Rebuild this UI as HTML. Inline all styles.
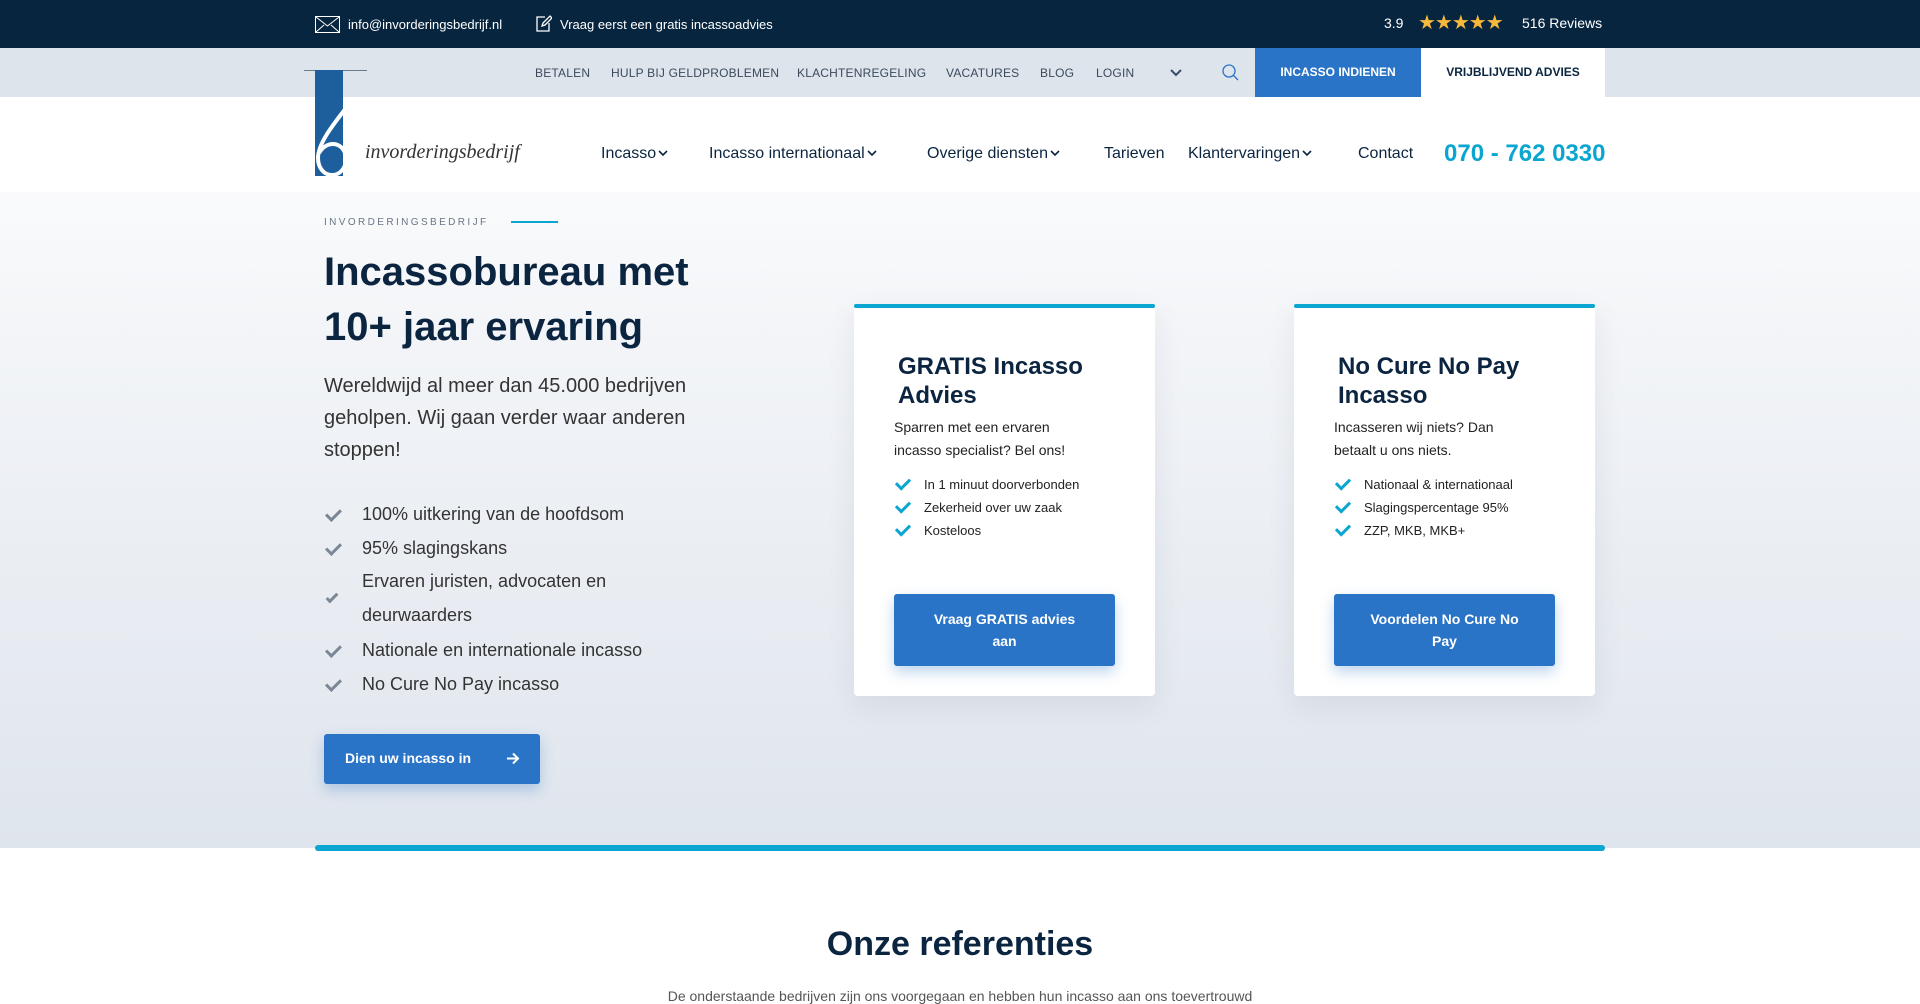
<!DOCTYPE html>
<html><head><meta charset="utf-8"><style>
*{margin:0;padding:0;box-sizing:border-box}
body{width:1920px;height:993px;overflow:hidden;font-family:"Liberation Sans",sans-serif;color:#0b2540;background:#fff;position:relative}
.abs{position:absolute}
.top{left:0;top:0;width:1920px;height:48px;background:#08253f;color:#fff;font-size:13px}
.sub{left:0;top:48px;width:1920px;height:49px;background:#dee4ec}
.sub span{position:absolute;top:18px;font-size:12px;color:#3a4a5c;letter-spacing:.2px}
.hero{left:0;top:97px;width:1920px;height:751px;background:linear-gradient(#fff 0%,#f3f5f8 30%,#dfe5ed 100%)}
.nav{font-size:16px;color:#0b2540;top:145px;white-space:nowrap}
.nav svg{margin-left:2px;vertical-align:1px}
.card{background:#fff;border-radius:4px;box-shadow:0 10px 30px rgba(20,40,80,.08)}
.card .bar{position:absolute;left:0;top:0;width:100%;height:4px;background:#0aa6d1;border-radius:2px}
.card h3{position:absolute;left:44px;top:48px;font-size:24px;line-height:29px;font-weight:700;color:#0b2540}
.card p{position:absolute;left:40px;top:112px;font-size:14px;line-height:23px;color:#222;width:200px}
.card ul{position:absolute;left:40px;top:173px;list-style:none;font-size:13px;color:#222;width:240px}
.card li{height:23px;padding-left:30px;position:relative}
.card li:before{content:"";position:absolute;left:2px;top:1px;width:11px;height:6px;border-left:3px solid #0aa6d1;border-bottom:3px solid #0aa6d1;transform:rotate(-45deg)}
.btn{background:#2a74c7;color:#fff;border-radius:3px;box-shadow:0 6px 14px rgba(42,116,199,.3);font-weight:700;text-align:center}
.hl{width:520px}
.hl li{position:absolute;left:0;font-size:18px;color:#333;padding-left:38px;list-style:none;white-space:nowrap}
.hl li:before{content:"";position:absolute;left:2px;top:5px;width:12px;height:6px;border-left:3px solid #7c8796;border-bottom:3px solid #7c8796;transform:rotate(-45deg)}
.hl li.no:before{display:none}
</style></head><body>
<div class="abs top">
 <svg class="abs" style="left:315px;top:16px" width="25" height="17" viewBox="0 0 25 17"><rect x="0.5" y="0.5" width="24" height="16" fill="none" stroke="#fff"/><path d="M1 1l11.5 9L24 1M1 16l8-7M24 16l-8-7" fill="none" stroke="#fff"/></svg>
 <span class="abs" style="left:348px;top:17px">info@invorderingsbedrijf.nl</span>
 <svg class="abs" style="left:536px;top:15px" width="16" height="17" viewBox="0 0 16 17"><path d="M9 2H1v14h12V8M6 11l1-3 7-7 2 2-7 7z" fill="none" stroke="#fff" stroke-width="1.3"/></svg>
 <span class="abs" style="left:560px;top:17px">Vraag eerst een gratis incassoadvies</span>
 <span class="abs" style="left:1384px;top:15px;font-size:14px">3.9</span>
 <span class="abs" style="left:1418px;top:10px;font-size:20px;color:#f6b93b;letter-spacing:-1px">★★★★★</span>
 <span class="abs" style="left:1522px;top:15px;font-size:14px">516 Reviews</span>
</div>
<div class="abs sub">
 <span style="left:535px">BETALEN</span><span style="left:611px">HULP BIJ GELDPROBLEMEN</span><span style="left:797px">KLACHTENREGELING</span><span style="left:946px">VACATURES</span><span style="left:1040px">BLOG</span><span style="left:1096px">LOGIN</span>
 <svg class="abs" style="left:1170px;top:21px" width="12" height="8"><path d="M1 1l5 5 5-5" fill="none" stroke="#3a4a6a" stroke-width="2"/></svg>
 <svg class="abs" style="left:1222px;top:16px" width="17" height="17"><circle cx="7" cy="7" r="6" fill="none" stroke="#2a74c7" stroke-width="1.3"/><path d="M11 11l5 5" stroke="#2a74c7" stroke-width="1.3"/></svg>
 <div class="abs" style="left:1255px;top:0;width:166px;height:49px;background:#2a74c7;color:#fff;font-size:12px;font-weight:700;text-align:center;line-height:49px">INCASSO INDIENEN</div>
 <div class="abs" style="left:1421px;top:0;width:184px;height:49px;background:#fff;color:#0b2540;font-size:12px;font-weight:700;text-align:center;line-height:49px">VRIJBLIJVEND ADVIES</div>
</div>
<div class="abs hero"></div>
<div class="abs" style="left:0;top:97px;width:1920px;height:95px;background:#fff"></div>
<div class="abs" style="left:304px;top:70px;width:63px;height:1px;background:#6a7a8a"></div>
<div class="abs" style="left:315px;top:70px;width:28px;height:106px;background:#1c5f9c"></div>
<svg class="abs" style="left:312px;top:106px" width="50" height="72" viewBox="0 0 50 72"><path d="M34 2C20 20 6 38 6 52c0 10 6 17 14 17s14-7 14-16-6-15-13-15c-6 0-11 4-14 9" fill="none" stroke="#fff" stroke-width="4"/></svg>
<span class="abs" style="left:365px;top:141px;font-family:'Liberation Serif',serif;font-style:italic;font-size:20px;color:#333">invorderingsbedrijf</span>
<span class="abs nav" style="left:601px">Incasso<svg width="10" height="7"><path d="M1 1l4 4 4-4" fill="none" stroke="#0b2540" stroke-width="1.6"/></svg></span>
<span class="abs nav" style="left:709px">Incasso internationaal<svg width="10" height="7"><path d="M1 1l4 4 4-4" fill="none" stroke="#0b2540" stroke-width="1.6"/></svg></span>
<span class="abs nav" style="left:927px">Overige diensten<svg width="10" height="7"><path d="M1 1l4 4 4-4" fill="none" stroke="#0b2540" stroke-width="1.6"/></svg></span>
<span class="abs nav" style="left:1104px">Tarieven</span>
<span class="abs nav" style="left:1188px">Klantervaringen<svg width="10" height="7"><path d="M1 1l4 4 4-4" fill="none" stroke="#0b2540" stroke-width="1.6"/></svg></span>
<span class="abs nav" style="left:1358px">Contact</span>
<span class="abs" style="left:1444px;top:140px;font-size:24px;font-weight:700;color:#0aa6d1">070 - 762 0330</span>
<span class="abs" style="left:324px;top:217px;font-size:10px;letter-spacing:2.4px;color:#6a7686">INVORDERINGSBEDRIJF</span>
<div class="abs" style="left:511px;top:221px;width:47px;height:2px;background:#0aa6d1"></div>
<h1 class="abs" style="left:324px;top:245px;font-size:40px;line-height:55px;font-weight:700;color:#0b2540;white-space:nowrap">Incassobureau met<br>10+ jaar ervaring</h1>
<p class="abs" style="left:324px;top:370px;font-size:20px;line-height:32px;color:#333;width:410px">Wereldwijd al meer dan 45.000 bedrijven geholpen. Wij gaan verder waar anderen stoppen!</p>
<ul class="abs hl" style="left:324px;top:0">
 <li style="top:504px">100% uitkering van de hoofdsom</li>
 <li style="top:538px">95% slagingskans</li>
 <li class="no" style="top:564px;line-height:34px">Ervaren juristen, advocaten en<br>deurwaarders<span style="position:absolute;left:2px;top:30px;width:12px;height:6px;border-left:3px solid #7c8796;border-bottom:3px solid #7c8796;transform:rotate(-45deg)"></span></li>
 <li style="top:640px">Nationale en internationale incasso</li>
 <li style="top:674px">No Cure No Pay incasso</li>
</ul>
<div class="abs btn" style="left:324px;top:734px;width:216px;height:50px;font-size:14px;text-align:left;padding:16px 0 0 21px">Dien uw incasso in<svg style="position:absolute;right:20px;top:18px" width="14" height="13" viewBox="0 0 14 13"><path d="M1 6.5h11M7 1.5l5 5-5 5" fill="none" stroke="#fff" stroke-width="2"/></svg></div>
<div class="abs card" style="left:854px;top:304px;width:301px;height:392px">
 <div class="bar"></div>
 <h3>GRATIS Incasso Advies</h3>
 <p>Sparren met een ervaren incasso specialist? Bel ons!</p>
 <ul><li>In 1 minuut doorverbonden</li><li>Zekerheid over uw zaak</li><li>Kosteloos</li></ul>
 <div class="abs btn" style="left:40px;top:290px;width:221px;height:72px;font-size:14px;line-height:22px;padding-top:14px">Vraag GRATIS advies<br>aan</div>
</div>
<div class="abs card" style="left:1294px;top:304px;width:301px;height:392px">
 <div class="bar"></div>
 <h3>No Cure No Pay Incasso</h3>
 <p>Incasseren wij niets? Dan betaalt u ons niets.</p>
 <ul><li>Nationaal &amp; internationaal</li><li>Slagingspercentage 95%</li><li>ZZP, MKB, MKB+</li></ul>
 <div class="abs btn" style="left:40px;top:290px;width:221px;height:72px;font-size:14px;line-height:22px;padding-top:14px">Voordelen No Cure No<br>Pay</div>
</div>
<div class="abs" style="left:315px;top:845px;width:1290px;height:6px;background:#0aa6d1;border-radius:3px"></div>
<div class="abs" style="left:0;top:925px;width:1920px;text-align:center;font-size:34px;font-weight:700;color:#0b2540">Onze referenties</div>
<div class="abs" style="left:0;top:988px;width:1920px;text-align:center;font-size:14px;color:#555">De onderstaande bedrijven zijn ons voorgegaan en hebben hun incasso aan ons toevertrouwd</div>
</body></html>
